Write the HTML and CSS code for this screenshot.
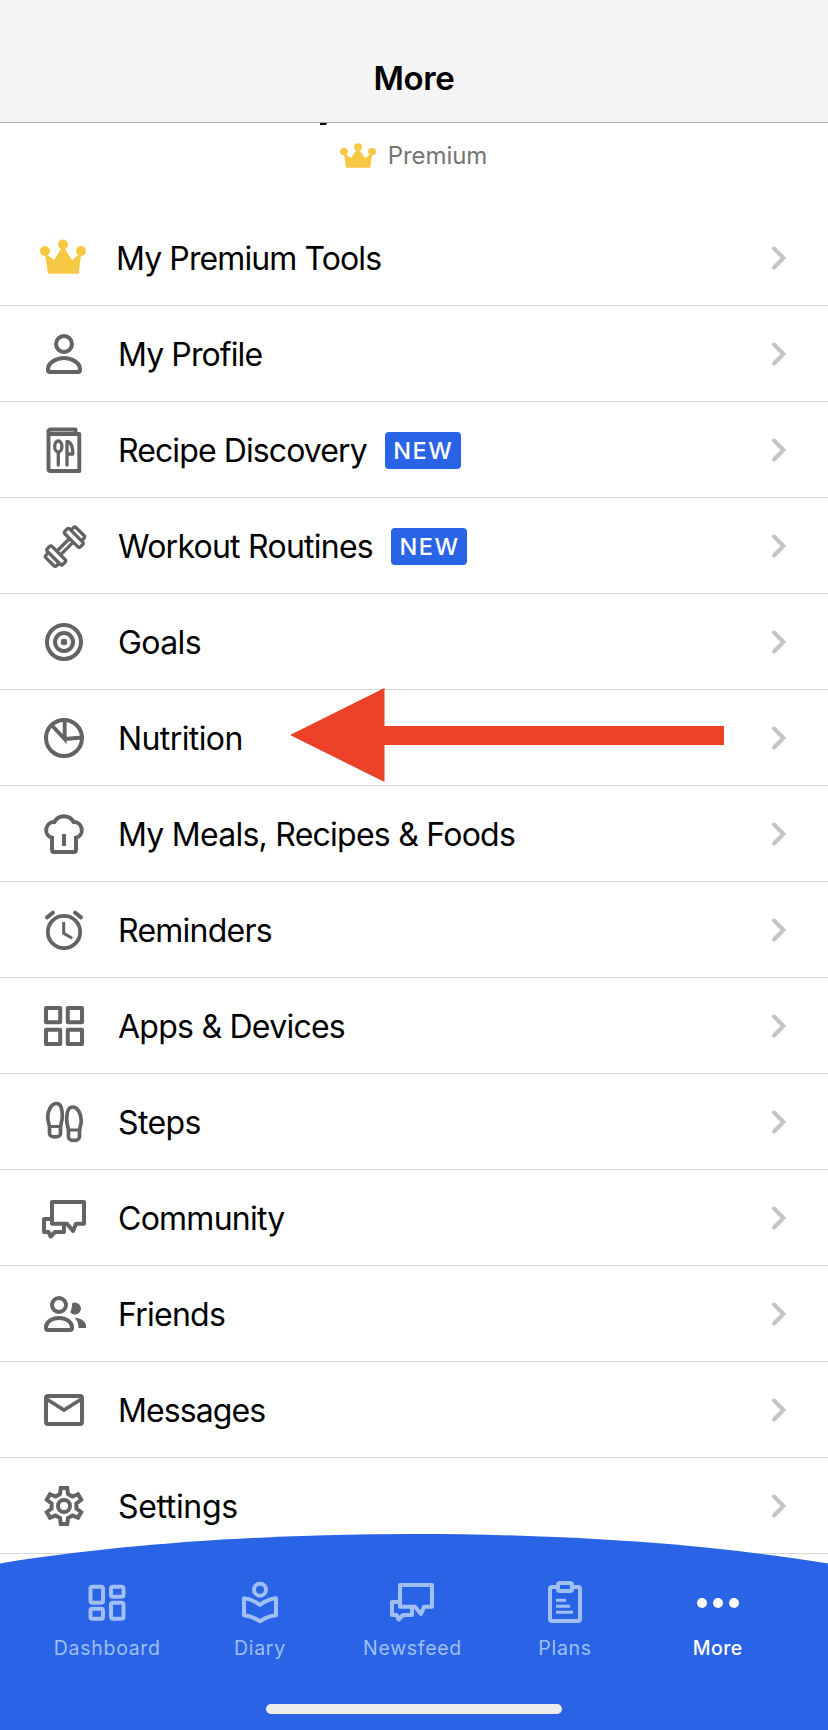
FILE: index.html
```html
<!DOCTYPE html>
<html lang="en">
<head>
<meta charset="utf-8">
<title>More</title>
<link rel="stylesheet" href="styles.css">
</head>
<body>
<svg class="defs" aria-hidden="true">
  <symbol id="chevron" viewBox="0 0 16 28"><path d="M3 4.5 12.5 14 3 23.5"/></symbol>
  <symbol id="crown" viewBox="4 8 46 35" preserveAspectRatio="none"><circle cx="9" cy="20" r="5"/><circle cx="27" cy="13.5" r="5"/><circle cx="45" cy="20" r="5"/><path d="M8.7 22 18 29 27 15 36 29 45.3 22 42.7 42.7H12Z"/></symbol>
  <symbol id="chat" viewBox="0 0 56 56"><path d="M16 12H48V33.7H40L37 41 31 33.7H16Z" stroke-linejoin="round"/><path d="M15 29H8V42H12.5L14.7 46.5 19 42H28V35" stroke-linejoin="round"/></symbol>
</svg>
<div class="screen">
  <header class="header"><h1>More</h1></header>
  <main>
    <section class="account">
      <span class="name-edge"></span>
      <svg class="crown-small"><use href="#crown"/></svg><span>Premium</span>
    </section>
    <ul class="menu">
      <li class="row"><svg class="icon crown"><use href="#crown"/></svg><span class="label tight">My Premium Tools</span><svg class="chevron"><use href="#chevron"/></svg></li>
      <li class="row"><svg class="icon" viewBox="0 0 56 56"><circle cx="28" cy="18" r="8"/><path d="M12 43c0-6 8-11 16-11s16 5 16 11v1a2 2 0 0 1-2 2H14a2 2 0 0 1-2-2z"/></svg><span class="label tight">My Profile</span><svg class="chevron"><use href="#chevron"/></svg></li>
      <li class="row"><svg class="icon" viewBox="0 0 56 56"><g stroke-width="3.9" stroke-linejoin="round"><path d="M12.5 10V47a2 2 0 0 0 2 2H43.3V12H14.5a2 2 0 0 1 0-4.500H39.5V11"/></g><g stroke-width="3.3" stroke-linecap="round" stroke-linejoin="round"><ellipse cx="22.3" cy="24.5" rx="3.6" ry="5.5"/><path d="M22.3 30V43M31 43V19.5C35 20 36.8 24 36.8 32H31.5"/></g></svg><span class="label tight">Recipe Discovery</span><span class="badge">NEW</span><svg class="chevron"><use href="#chevron"/></svg></li>
      <li class="row"><svg class="icon" viewBox="0 0 56 56"><g transform="translate(29 28.7) rotate(-45)" stroke-width="3.3"><path d="M-9 -2.6H9M-9 2.6H9"/><rect x="9" y="-11" width="6.800" height="22" rx="2"/><rect x="-15.800" y="-11" width="6.800" height="22" rx="2"/><path d="M16-7.5h3.300a2 2 0 0 1 2 2v11a2 2 0 0 1-2 2H16M-16-7.5h-3.300a2 2 0 0 0-2 2v11a2 2 0 0 0 2 2H-16"/></g></svg><span class="label">Workout Routines</span><span class="badge">NEW</span><svg class="chevron"><use href="#chevron"/></svg></li>
      <li class="row"><svg class="icon" viewBox="0 0 56 56"><circle cx="28" cy="28" r="17"/><circle cx="28" cy="28" r="9"/><circle class="solid" cx="28" cy="28" r="3.200"/></svg><span class="label loose">Goals</span><svg class="chevron"><use href="#chevron"/></svg></li>
      <li class="row"><svg class="icon" viewBox="0 0 56 56"><circle cx="28" cy="28" r="18"/><path d="M28.7 10V29L16 15.5M28.7 29 46 27.5" stroke-width="3.900"/></svg><span class="label loose">Nutrition</span><svg class="chevron"><use href="#chevron"/></svg><svg class="arrow" viewBox="0 0 434 94"><path d="M0 47 94.5 0V38H434V57H94.5V94Z"/></svg></li>
      <li class="row"><svg class="icon" viewBox="0 0 56 56"><path d="M16 31.7A8 8 0 0 1 18.3 16 11 11 0 0 1 37.7 16 8 8 0 0 1 40 31.7V44a2 2 0 0 1-2 2H18a2 2 0 0 1-2-2ZM28 28V40"/></svg><span class="label">My Meals, Recipes &amp; Foods</span><svg class="chevron"><use href="#chevron"/></svg></li>
      <li class="row"><svg class="icon" viewBox="0 0 56 56"><circle cx="28" cy="30" r="16.2" stroke-width="3.8"/><path d="M27.7 20V31.3L36.2 36.2" stroke-width="3"/><path d="M11 15.3 17 10.7M45 15.3 39 10.7" stroke-linecap="round"/></svg><span class="label">Reminders</span><svg class="chevron"><use href="#chevron"/></svg></li>
      <li class="row"><svg class="icon" viewBox="0 0 56 56"><path stroke-linejoin="round" d="M10 10H24.2V24.2H10ZM31.8 10H46V24.2H31.8ZM10 31.8H24.2V46H10ZM31.8 31.8H46V46H31.8Z"/></svg><span class="label">Apps &amp; Devices</span><svg class="chevron"><use href="#chevron"/></svg></li>
      <li class="row"><svg class="icon" viewBox="0 0 56 56"><g stroke-width="3.7"><path d="M20.5 9.5C15.5 9.5 11.7 16 11.7 23.5 11.7 27 13.5 30 13.5 34V39.5C13.5 44 24.5 44 24.5 39.5V34C24.5 30 26.3 27 26.3 22.5 26.3 16 25.5 9.5 20.5 9.5Z"/><path d="M36.5 13C31.5 13 30.7 19.5 30.7 26 30.7 30.5 32.5 33.5 32.5 37.5V43C32.5 47.5 43.5 47.5 43.5 43V37.5C43.5 33.5 45.3 30.5 45.3 27 45.3 19.5 41.5 13 36.5 13Z"/><path d="M13.5 32.5H24.5M32.5 36H43.5" stroke-width="2.8"/></g></svg><span class="label loose">Steps</span><svg class="chevron"><use href="#chevron"/></svg></li>
      <li class="row"><svg class="icon"><use href="#chat"/></svg><span class="label">Community</span><svg class="chevron"><use href="#chevron"/></svg></li>
      <li class="row"><svg class="icon" viewBox="0 0 56 56"><circle cx="23" cy="19" r="7"/><path d="M10 41c0-5 6-9 13-9s13 4 13 9v1a2 2 0 0 1-2 2H12a2 2 0 0 1-2-2z"/><path class="solid" d="M36 17.4A6 6 0 1 1 34.2 26.3C35.5 23.5 36.2 20.5 36 17.4ZM38.5 31.700C45 32 50 35.500 50 39.500V42H42.500C42.500 37.500 41.500 34.500 38.500 31.700Z"/></svg><span class="label">Friends</span><svg class="chevron"><use href="#chevron"/></svg></li>
      <li class="row"><svg class="icon" viewBox="0 0 56 56"><rect x="10" y="14" width="36" height="28" rx="2"/><path d="M10.500 17 28 28 45.500 17" stroke-width="3.600"/></svg><span class="label tight">Messages</span><svg class="chevron"><use href="#chevron"/></svg></li>
      <li class="row"><svg class="icon" viewBox="-28 -28 56 56"><circle r="6"/><path d="M-4-12-3.200-18H3.200L4-12 8.400-9.500 14-11.800 17.200-6.200 12.400-2.500V2.500L17.200 6.200 14 11.800 8.400 9.500 4 12 3.200 18H-3.200L-4 12-8.400 9.500-14 11.800-17.200 6.200-12.400 2.500V-2.500L-17.200-6.200-14-11.800-8.400-9.500Z"/></svg><span class="label settings">Settings</span><svg class="chevron"><use href="#chevron"/></svg></li>
    </ul>
  </main>
  <footer class="tabbar">
    <svg class="curve" viewBox="0 0 828 196"><path d="M0 29.500C120 9.500 270 0 414 0S708 9.500 828 29.500V196H0Z"/></svg>
    <nav class="tabs">
      <a class="tab"><svg class="tab-icon" viewBox="0 0 56 56"><rect x="11.500" y="10.700" width="12.500" height="16" rx="2"/><rect x="11.500" y="32.700" width="12.500" height="10" rx="2"/><rect x="32" y="10.700" width="12.500" height="10" rx="2"/><rect x="32" y="26.700" width="12.500" height="16" rx="2"/></svg><span>Dashboard</span></a>
      <a class="tab"><svg class="tab-icon" viewBox="0 0 56 56"><circle cx="28" cy="13.700" r="6"/><path stroke-linejoin="round" d="M12 22.300Q20.500 23 28 29 35.500 23 44 22.300V39.300Q36 40 28 45.300 20 40 12 39.300Z"/></svg><span>Diary</span></a>
      <a class="tab"><svg class="tab-icon" viewBox="0 3 56 56"><use href="#chat" width="56" height="56"/></svg><span>Newsfeed</span></a>
      <a class="tab"><svg class="tab-icon" viewBox="0 0 56 56"><path d="M19 11H15a2 2 0 0 0-2 2V43a2 2 0 0 0 2 2H41a2 2 0 0 0 2-2V13a2 2 0 0 0-2-2H37"/><rect x="21" y="7" width="14" height="8" rx="2"/><path d="M19 24.300H29M19 30.300H33M19 36.300H36" stroke-width="3"/></svg><span>Plans</span></a>
      <a class="tab active"><svg class="tab-icon" viewBox="0 0 56 56"><g class="solid"><circle cx="12" cy="27" r="5"/><circle cx="28" cy="27" r="5"/><circle cx="44" cy="27" r="5"/></g></svg><span>More</span></a>
    </nav>
    <div class="home-indicator"></div>
  </footer>
</div>
</body>
</html>
```
FILE: styles.css
```css
* { box-sizing: border-box; }
body { margin: 0; background: #fff; font-family: Inter, "Liberation Sans", sans-serif; color: #000; }
.defs { position: absolute; width: 0; height: 0; }
.screen { position: relative; width: 828px; height: 1730px; overflow: hidden; }

.header { height: 123px; padding-top: 58px; background: #f5f5f5; border-bottom: 1px solid #acacac; text-align: center; }
.header h1 { margin: 0; font-size: 33px; line-height: 41px; font-weight: 600; letter-spacing: -0.4px; }

.account { position: relative; height: 87px; padding: 16px 1px 0 0; display: flex; justify-content: center; gap: 12px; color: #757575; font-size: 24px; line-height: 33px; letter-spacing: -0.1px; }
.crown-small { width: 36px; height: 25px; margin-top: 4px; fill: #f7c844; }
.name-edge { position: absolute; left: 320px; top: 0; width: 7px; height: 2px; background: #000; border-radius: 0 0 5px 1px; }

.menu { margin: 0; padding: 0; list-style: none; }
.row { position: relative; height: 96px; padding: 0 41px 0 36px; display: flex; align-items: center; box-shadow: inset 0 -1px #d8d8da; }
.icon { flex: none; width: 56px; height: 56px; margin-right: 26px; fill: none; stroke: #636363; stroke-width: 4; }
.icon .solid { fill: #636363; stroke: none; }
.icon.crown { width: 46px; height: 35px; margin: 0 30px 4px 4px; fill: #f7c844; stroke: none; }
.label { margin-top: 1px; font-size: 32px; line-height: 40px; letter-spacing: -0.75px; white-space: nowrap; }
.label.tight { letter-spacing: -0.9px; }
.label.loose { letter-spacing: -0.6px; }
.label.settings { letter-spacing: -0.35px; }
.badge { margin: 1px 0 0 18px; width: 76px; height: 37px; padding-left: 1px; border-radius: 4px; background: #2a64e6; color: #fff; font-size: 23.5px; line-height: 37px; font-weight: 500; letter-spacing: 1.5px; text-align: center; }
.chevron { width: 16px; height: 28px; margin-left: auto; fill: none; stroke: #c4c4c6; stroke-width: 4; stroke-linecap: round; }
.arrow { position: absolute; left: 290px; top: -2px; width: 434px; height: 94px; fill: #eb4127; }

.tabbar { position: absolute; left: 0; bottom: 0; width: 828px; height: 196px; padding: 42px 34px 0 31px; }
.curve { position: absolute; inset: 0; width: 828px; height: 196px; fill: #2a64e6; }
.tabs { position: relative; display: grid; grid-template-columns: repeat(5, 1fr); }
.tab { display: flex; flex-direction: column; align-items: center; color: #a0bff5; font-size: 19.5px; line-height: 24px; letter-spacing: 0.7px; }
.tab span { margin-top: 4px; }
.tab-icon { width: 56px; height: 56px; fill: none; stroke: currentColor; stroke-width: 4; }
.tab-icon .solid { fill: currentColor; stroke: none; }
.tab.active { color: #fff; font-weight: 500; letter-spacing: 0.4px; }
.home-indicator { position: relative; width: 296px; height: 10px; margin: 44px auto 0 235px; border-radius: 5px; background: #eee; }
```
